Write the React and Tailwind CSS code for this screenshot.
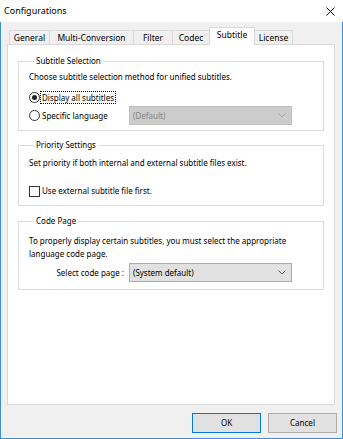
import React from "react";

const tabs = [
  { label: "General", width: "w-[41px]" },
  { label: "Multi-Conversion", width: "w-[85px]" },
  { label: "Filter", width: "w-[40px]" },
  { label: "Codec", width: "w-[38px]" },
  { label: "Subtitle", width: "w-[46px]", active: true },
  { label: "License", width: "w-[39px]" },
];

function Chevron({ color }) {
  return (
    <svg width="8" height="5" viewBox="0 0 8 5" className="shrink-0">
      <polyline points="0.5,0.5 4,4 7.5,0.5" fill="none" stroke={color} strokeWidth="1" />
    </svg>
  );
}

function Group({ title, className, children }) {
  return (
    <fieldset className={`mx-[10px] border border-[#dcdcdc] px-[10px] ${className}`}>
      <legend className="ml-[5px] px-[2px] leading-[14px]">{title}</legend>
      {children}
    </fieldset>
  );
}

export default function App() {
  return (
    <div className="flex h-[439px] w-[343px] flex-col bg-white font-['Segoe_UI','Noto_Sans',sans-serif] text-[8px] text-black">
      <div className="flex h-[22px] items-center justify-between bg-white pl-[4px] pr-[8px]">
        <span className="text-[9px]">Configurations</span>
        <svg width="9" height="9" viewBox="0 0 9 9">
          <path d="M0.5 0.5 L8.5 8.5 M8.5 0.5 L0.5 8.5" stroke="#000" strokeWidth="1" />
        </svg>
      </div>

      <div className="flex flex-1 flex-col border-x border-b border-[#3b8fdc] bg-[#f0f0f0] pl-[6px] pt-[5px]">
        <div className="ml-[2px] flex h-[18px] items-end text-[8.5px]">
          {tabs.map((tab, i) =>
            tab.active ? (
              <div
                key={tab.label}
                className={`relative z-10 flex h-[18px] items-center justify-center border-x border-t border-[#d9d9d9] bg-white pb-[2px] -ml-px ${tab.width}`}
              >
                {tab.label}
              </div>
            ) : (
              <div
                key={tab.label}
                className={`flex h-[15px] items-center justify-center border-x border-t border-[#d9d9d9] bg-[#f0f0f0] ${i > 0 ? "-ml-px" : ""} ${tab.width}`}
              >
                {tab.label}
              </div>
            )
          )}
        </div>

        <div className="-mt-px flex h-[361px] w-[328px] flex-col border border-[#d9d9d9] bg-white">
          <Group title="Subtitle Selection" className="mt-[9px] pb-[5px]">
            <p className="mt-[2px] h-[14px] leading-[14px]">
              Choose subtitle selection method for unified subtitles.
            </p>
            <div className="mt-[6px] flex h-[14px] items-center">
              <span className="flex h-[11px] w-[11px] items-center justify-center rounded-full border border-[#333] bg-white">
                <span className="h-[5px] w-[5px] rounded-full bg-[#222]" />
              </span>
              <span className="border border-dotted border-black px-[1px] leading-[11px]">
                Display all subtitles
              </span>
            </div>
            <div className="mt-[2px] flex h-[19px] items-center">
              <div className="flex w-[100px] items-center">
                <span className="h-[11px] w-[11px] rounded-full border border-[#333] bg-white" />
                <span className="ml-[2px]">Specific language</span>
              </div>
              <div className="flex h-[19px] w-[163px] items-center justify-between border border-[#bfbfbf] bg-[#cccccc] pl-[3px] pr-[5px] text-[#838383]">
                <span>(Default)</span>
                <Chevron color="#a8a8a8" />
              </div>
            </div>
          </Group>

          <Group title="Priority Settings" className="mt-[7px] pb-[7px]">
            <p className="mt-[4px] h-[14px] leading-[14px]">
              Set priority if both internal and external subtitle files exist.
            </p>
            <div className="mt-[14px] flex h-[14px] items-center">
              <span className="h-[11px] w-[11px] border border-[#333] bg-white" />
              <span className="ml-[2px]">Use external subtitle file first.</span>
            </div>
          </Group>

          <Group title="Code Page" className="mt-[8px] pb-[7px]">
            <p className="mt-[6px] leading-[13px]">
              To properly display certain subtitles, you must select the appropriate
              <br />
              language code page.
            </p>
            <div className="mt-[3px] flex h-[19px] items-center">
              <span className="w-[100px] pr-[5px] text-right">Select code page :</span>
              <div className="flex h-[19px] w-[163px] items-center justify-between border border-[#adadad] bg-[#e1e1e1] pl-[3px] pr-[5px]">
                <span>(System default)</span>
                <Chevron color="#606060" />
              </div>
            </div>
          </Group>
        </div>

        <div className="mt-[8px] flex justify-end gap-[7px] pr-[5px]">
          <button className="h-[20px] w-[69px] border border-[#0078d7] bg-[#e1e1e1]">OK</button>
          <button className="h-[20px] w-[69px] border border-[#adadad] bg-[#e1e1e1]">Cancel</button>
        </div>
      </div>
    </div>
  );
}
